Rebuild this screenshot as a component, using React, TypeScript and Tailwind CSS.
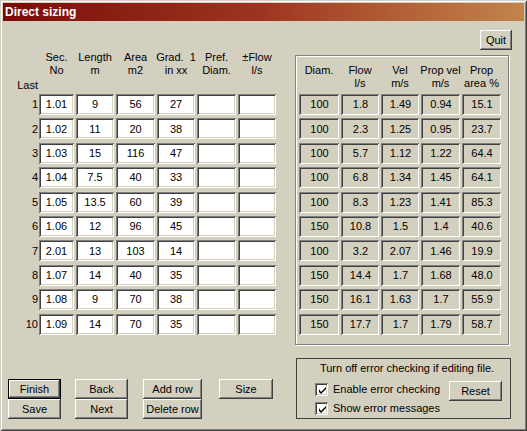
import { type FC } from 'react';

// rows of the input grid: section, length, area, gradient
const INPUT_ROWS: string[][] = [
	['1.01', '9', '56', '27'],
	['1.02', '11', '20', '38'],
	['1.03', '15', '116', '47'],
	['1.04', '7.5', '40', '33'],
	['1.05', '13.5', '60', '39'],
	['1.06', '12', '96', '45'],
	['2.01', '13', '103', '14'],
	['1.07', '14', '40', '35'],
	['1.08', '9', '70', '38'],
	['1.09', '14', '70', '35'],
];

// results: diam, flow, vel, prop vel, prop area
const RESULT_ROWS: string[][] = [
	['100', '1.8', '1.49', '0.94', '15.1'],
	['100', '2.3', '1.25', '0.95', '23.7'],
	['100', '5.7', '1.12', '1.22', '64.4'],
	['100', '6.8', '1.34', '1.45', '64.1'],
	['100', '8.3', '1.23', '1.41', '85.3'],
	['150', '10.8', '1.5', '1.4', '40.6'],
	['100', '3.2', '2.07', '1.46', '19.9'],
	['150', '14.4', '1.7', '1.68', '48.0'],
	['150', '16.1', '1.63', '1.7', '55.9'],
	['150', '17.7', '1.7', '1.79', '58.7'],
];

const INPUT_HEADERS: [string, string][] = [
	['Sec.', 'No'],
	['Length', 'm'],
	['Area', 'm2'],
	['Grad.  1', 'in xx'],
	['Pref.', 'Diam.'],
	['±Flow', 'l/s'],
];

const RESULT_HEADERS: [string, string][] = [
	['Diam.', ''],
	['Flow', 'l/s'],
	['Vel', 'm/s'],
	['Prop vel', 'm/s'],
	['Prop', 'area %'],
];

const RAISED = 'shadow-[inset_-1px_-1px_0_#404040,inset_1px_1px_0_#ffffff,inset_-2px_-2px_0_#808080]';
const SUNKEN =
	'shadow-[inset_1px_1px_0_#808080,inset_-1px_-1px_0_#ffffff,inset_2px_2px_0_#404040,inset_-2px_-2px_0_#d4d0c0]';

interface ButtonProps {
	label: string;
	className?: string;
	isDefault?: boolean;
}

const Button: FC<ButtonProps> = ({ label, className = '', isDefault }) => {
	if (isDefault) {
		return (
			<div className={`border border-black flex ${className}`}>
				<div className={`flex-1 flex items-center justify-center bg-[#d4d0c0] ${RAISED}`}>{label}</div>
			</div>
		);
	}
	return <div className={`flex items-center justify-center bg-[#d4d0c0] ${RAISED} ${className}`}>{label}</div>;
};

const CheckBox: FC<{ label: string }> = ({ label }) => (
	<div className="flex items-center gap-[5px] h-[19px]">
		<div className={`w-[13px] h-[13px] bg-white flex items-center justify-center ${SUNKEN}`}>
			<svg width="7" height="7" viewBox="0 0 7 7" className="mt-[1px] ml-[1px]">
				<path d="M0 2 L0 5 L2 7 L7 2 L7 0 L2 5 Z" fill="#000" />
			</svg>
		</div>
		<span>{label}</span>
	</div>
);

export default function App() {
	return (
		<div className="w-[527px] h-[431px] p-[3px] bg-[#d4d0c0] text-black text-[11px] font-['Liberation_Sans',Arial,sans-serif] shadow-[inset_1px_1px_0_#d4d0c8,inset_-1px_-1px_0_#404040,inset_2px_2px_0_#ffffff,inset_-2px_-2px_0_#808080] flex flex-col">
			<div className="h-[18px] flex items-center pl-[2px] bg-gradient-to-r from-[#7c0808] via-[#9e3420] to-[#c2844c] text-white font-bold text-[12px]">
				Direct sizing
			</div>

			<div className="flex-1 flex">
				{/* input table + nav buttons */}
				<div className="w-[287px] flex flex-col pt-[30px] pb-[9px]">
					<div className="flex">
						<div className="w-[36px]" />
						<div className="grid grid-cols-[35px_38px_39px_38px_39px_38px] gap-x-[2px] leading-[13px]">
							{INPUT_HEADERS.map(([a, b]) => (
								<div key={a} className="flex flex-col items-center whitespace-pre">
									<span>{a}</span>
									<span>{b}</span>
								</div>
							))}
						</div>
					</div>
					<div className="mt-[2px] w-[35px] h-[13px] leading-[13px] text-right">Last</div>
					<div className="mt-[2px] flex flex-col gap-y-[3.4px]">
						{INPUT_ROWS.map((row, i) => (
							<div key={i} className="flex items-center h-[21px]">
								<div className="w-[35px] mr-[1px] text-right">{i + 1}</div>
								<div className="grid grid-cols-[35px_38px_39px_38px_39px_38px] gap-x-[2px] h-full">
									{[...row, '', ''].map((v, j) => (
										<div key={j} className={`bg-white flex items-center justify-center ${SUNKEN}`}>
											{v}
										</div>
									))}
								</div>
							</div>
						))}
					</div>

					<div className="mt-auto flex pl-[5px]">
						<div className="w-[53px] flex flex-col">
							<Button label="Finish" isDefault className="h-[20px]" />
							<Button label="Save" className="h-[20px]" />
						</div>
						<div className="w-[53px] ml-[14px] flex flex-col">
							<Button label="Back" className="h-[20px]" />
							<Button label="Next" className="h-[20px]" />
						</div>
						<div className="w-[59px] ml-[15px] flex flex-col">
							<Button label="Add row" className="h-[20px]" />
							<Button label="Delete row" className="h-[20px]" />
						</div>
						<div className="w-[54px] ml-[17px] flex flex-col">
							<Button label="Size" className="h-[20px]" />
						</div>
					</div>
				</div>

				{/* results */}
				<div className="flex-1 flex flex-col">
					<Button label="Quit" className="mt-[9px] ml-[190px] w-[32px] h-[20px]" />

					<div className="mt-[5px] ml-[5px] w-[214px] h-[290px] border border-[#808080] shadow-[inset_1px_1px_0_#ffffff,1px_1px_0_#ffffff] pt-[8px] pl-[3px]">
						<div className="grid grid-cols-[40px_38px_38px_39px_39px] gap-x-[2px] leading-[13px] h-[26px]">
							{RESULT_HEADERS.map(([a, b]) => (
								<div key={a} className="flex flex-col items-center whitespace-pre">
									<span>{a}</span>
									<span>{b}</span>
								</div>
							))}
						</div>
						<div className="mt-[4px] flex flex-col gap-y-[3.4px]">
							{RESULT_ROWS.map((row, i) => (
								<div key={i} className="grid grid-cols-[40px_38px_38px_39px_39px] gap-x-[2px] h-[21px]">
									{row.map((v, j) => (
										<div key={j} className={`flex items-center justify-center pl-[1px] ${SUNKEN}`}>
											{v}
										</div>
									))}
								</div>
							))}
						</div>
					</div>

					<div className="mt-[13px] ml-[6px] w-[215px] h-[61px] border border-[#404040] flex flex-col">
						<div className="mt-[3px] leading-[13px] text-center pl-[7px]">Turn off error checking if editing file.</div>
						<div className="mt-[5px] flex">
							<div className="w-[152px] pl-[18px] flex flex-col">
								<CheckBox label="Enable error checking" />
								<CheckBox label="Show error messages" />
							</div>
							<Button label="Reset" className="mt-[1px] w-[53px] h-[20px]" />
						</div>
					</div>
				</div>
			</div>
		</div>
	);
}
